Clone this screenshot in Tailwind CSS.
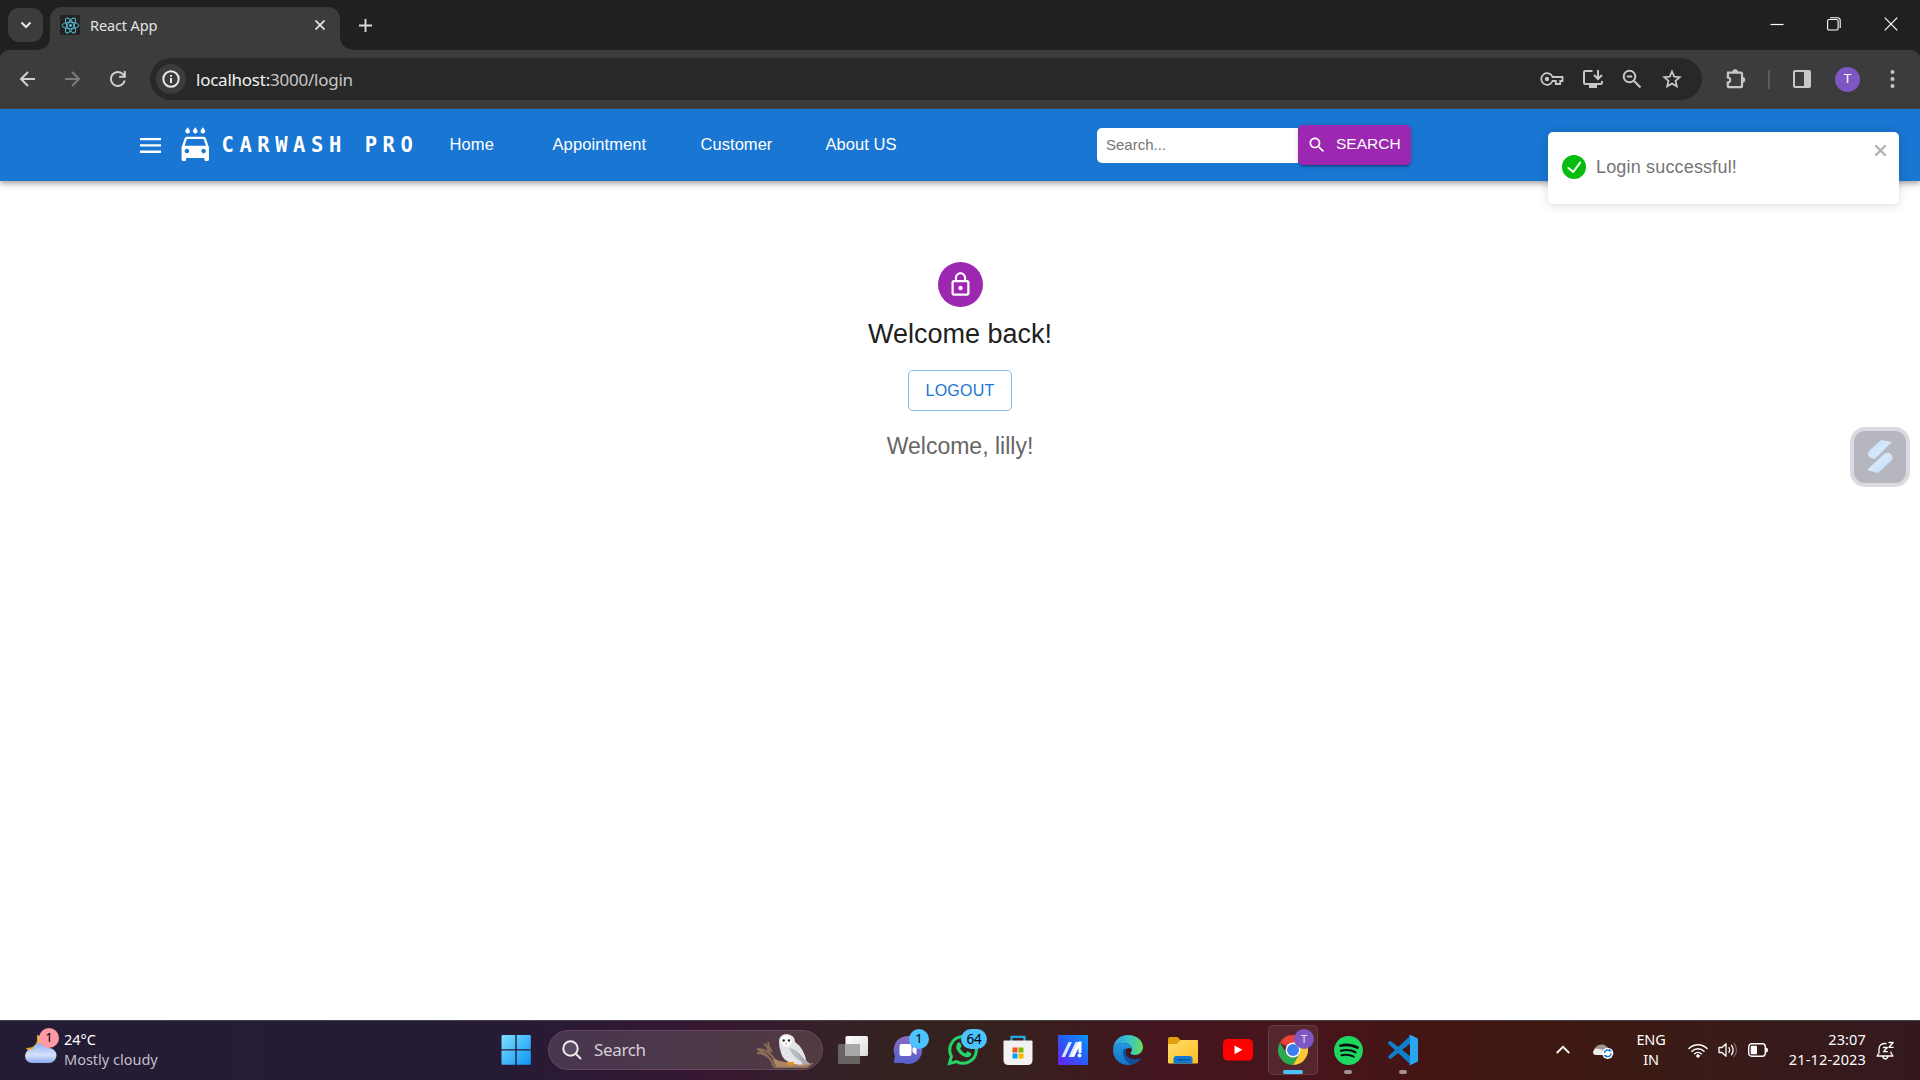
<!DOCTYPE html>
<html lang="en">
<head>
<meta charset="utf-8">
<title>React App</title>
<script src="https://cdn.jsdelivr.net/npm/@tailwindcss/browser@4"></script>
</head>
<body class="flex h-screen w-screen flex-col overflow-hidden bg-white font-['Liberation_Sans',Arial,sans-serif]">

<!-- Tab strip -->
<header class="flex h-[50px] shrink-0 items-stretch bg-[#1f2120] font-['Noto_Sans',sans-serif]">
  <button class="ml-2 mt-2 flex h-[34px] w-[35px] items-center justify-center rounded-[11px] bg-[#3c3c3c]">
    <svg class="size-[12px]" viewBox="0 0 12 12" fill="none" stroke="#e8e8e8" stroke-width="2"><path d="M1.500 3.500 6 8l4.500-4.500"/></svg>
  </button>
  <div class="relative -ml-2 flex w-[321px] items-center pl-[25px] pr-[31px]">
    <svg class="absolute inset-0 h-[50px] w-[321px]" viewBox="0 0 321 50" fill="#3c3c3c"><path d="M0 50c10 0 15-5 15-14V19C15 12 20 7 27 7h266c7 0 12 5 12 12v17c0 9 6 14 16 14z"/></svg>
    <div class="relative flex size-5 items-center justify-center rounded-[2px] bg-[#222]">
      <svg class="size-[19px]" viewBox="-10 -10 20 20" fill="none" stroke="#58c4dc" stroke-width="1"><circle r="1.500" fill="#58c4dc" stroke="none"/><ellipse rx="8.800" ry="3.400"/><ellipse rx="8.800" ry="3.400" transform="rotate(60)"/><ellipse rx="8.800" ry="3.400" transform="rotate(120)"/></svg>
    </div>
    <span class="relative ml-[10px] pt-px text-[14.500px] tracking-[-0.120px] text-[#e3e3e3]">React App</span>
    <svg class="relative ml-auto size-[10px]" viewBox="0 0 10 10" stroke="#e3e3e3" stroke-width="1.800"><path d="M.5.5l9 9M9.500.5l-9 9"/></svg>
  </div>
  <button class="flex w-4 items-center justify-end">
    <svg class="size-[13px]" viewBox="0 0 13 13" stroke="#dadada" stroke-width="1.900"><path d="M6.500 0v13M0 6.500h13"/></svg>
  </button>
  <div class="ml-auto flex items-center pb-[2px] pr-[22px]">
    <svg class="mr-[43px] h-[14px] w-[14px]" viewBox="0 0 14 14" stroke="#fff" stroke-width="1.200"><path d="M.5 7.500h13"/></svg>
    <svg class="mr-[43px] h-[14px] w-[14px]" viewBox="0 0 14 14" fill="none" stroke="#fff" stroke-width="1.100"><rect x=".6" y="2.500" width="10.500" height="10.500" rx="1.500"/><path d="M3 .7h7.500c1.600 0 2.700 1.100 2.700 2.700V11"/></svg>
    <svg class="h-[14px] w-[14px]" viewBox="0 0 14 14" stroke="#fff" stroke-width="1.200"><path d="M.7.7l12.600 12.600M13.300.7.7 13.300"/></svg>
  </div>
</header>

<!-- Address bar -->
<div class="shrink-0 bg-[#1f2120]">
<div class="flex h-[59px] items-center rounded-t-[9px] border-b border-[#4a4a46] bg-[#3c3c3c] pl-[18px] pr-[18px]">
  <svg class="size-5" viewBox="0 0 20 20" fill="none" stroke="#d0d0d0" stroke-width="2"><path d="M17 10H3M10 3l-7 7 7 7"/></svg>
  <svg class="ml-6 size-5" viewBox="0 0 20 20" fill="none" stroke="#7c7c7c" stroke-width="2"><path d="M3 10h14M10 3l7 7-7 7"/></svg>
  <svg class="ml-[26px] size-5" viewBox="0 0 20 20" fill="none" stroke="#d0d0d0" stroke-width="2"><path d="M16.700 11.500A7 7 0 1 1 15 5.200l1.500 1.700"/><path d="M16.800 2v5.700h-5.700"/></svg>
  <div class="ml-[22px] flex h-[42px] w-[1552px] items-center rounded-full bg-[#282828] pl-[6px] pr-[19px]">
    <span class="flex size-[30px] items-center justify-center rounded-full bg-[#3c3c3c]"><svg class="size-[18px]" viewBox="0 0 18 18" fill="none" stroke="#e8e8e8" stroke-width="2"><circle cx="9" cy="9" r="7.700"/><path d="M9 8v5M9 5v1.800"/></svg></span>
    <span class="ml-[10px] pt-px font-['Noto_Sans',sans-serif] text-[17px] tracking-[-0.240px] text-[#c7c7c7]"><span class="text-[#f0f0f0]">localhost:</span>3000/login</span>
    <div class="ml-auto flex items-center gap-[18px]">
      <svg class="h-[22px] w-6" viewBox="0 0 24 22" fill="none" stroke="#c7c7c7" stroke-width="1.800"><path d="M12.500 9h10v4h-2.300v3h-4.400v-3h-3.300a5.800 5.800 0 1 1 0-4z"/><circle cx="7" cy="11" r="2.200" fill="#c7c7c7" stroke="none"/></svg>
      <svg class="-mr-px size-[22px]" viewBox="0 0 22 22" fill="none" stroke="#c7c7c7" stroke-width="2"><path d="M10.500 3H3.300Q2 3 2 4.300v10.400Q2 16 3.300 16h15.400q1.300 0 1.300-1.300V13"/><path d="M16 2v8.500M12 7l4 4 4-4"/><path d="M7 16h8v4H7z" fill="#c7c7c7" stroke="none"/></svg>
      <svg class="size-[22px]" viewBox="0 0 22 22" fill="none" stroke="#c7c7c7" stroke-width="2"><circle cx="8.500" cy="8.500" r="5.800"/><path d="M5.800 8.500h5.400M12.800 12.800l6.700 6.700"/></svg>
      <svg class="size-[22px]" viewBox="0 0 22 22" fill="none" stroke="#c7c7c7" stroke-width="1.800"><path d="M11 3.500l2.200 5.200 5.500.5-4.200 3.700 1.300 5.500L11 15.500l-4.800 2.900 1.300-5.500-4.200-3.700 5.500-.5z"/></svg>
    </div>
  </div>
  <svg class="ml-[23px] size-[22px]" viewBox="0 0 22 22" fill="none" stroke="#c7c7c7" stroke-width="2.200"><path d="M3 4.600h13q1 0 1 1v12.600q0 1-1 1H3.800q-1 0-1-1v-3.700c3.200 0 3.200-5 0-5z"/><path d="M8 4a2.200 2.200 0 0 1 4.400 0zM17.500 9.500a2.200 2.200 0 0 1 0 4.400z" fill="#c7c7c7" stroke="none"/><path d="M8.200 4a2 2 0 0 1 4 0M17.500 9.700a2 2 0 0 1 0 4" stroke-width="1.600"/></svg>
  <span class="ml-[21px] h-[19px] w-[2px] bg-[#5c5c5c]"></span>
  <svg class="ml-[22px] size-5" viewBox="0 0 20 20" fill="none" stroke="#c7c7c7" stroke-width="2"><rect x="2" y="2" width="16" height="16" rx="1"/><path d="M12 2h6v16h-6z" fill="#c7c7c7" stroke="none"/></svg>
  <span class="ml-[23px] flex size-[25px] items-center justify-center rounded-full bg-[#7e57c2] text-[13px] text-white">T</span>
  <svg class="ml-auto h-5 w-[19px]" viewBox="0 0 19 20" fill="#c7c7c7"><circle cx="9.500" cy="3" r="2"/><circle cx="9.500" cy="10" r="2"/><circle cx="9.500" cy="17" r="2"/></svg>
</div>
</div>

<!-- App bar -->
<nav class="relative z-10 flex h-[72px] shrink-0 items-center bg-[#1976d2] pl-[140px] text-white shadow-[0px_2px_4px_-1px_rgba(0,0,0,0.2),0px_4px_5px_0px_rgba(0,0,0,0.14),0px_1px_10px_0px_rgba(0,0,0,0.12)]">
  <svg class="h-[15px] w-[21px]" viewBox="0 0 21 15" fill="#fff"><path d="M0 0h21v2.300H0zM0 6.300h21v2.300H0zM0 12.600h21v2.300H0z"/></svg>
  <svg class="mb-px ml-4 size-[36.500px]" viewBox="0 0 24 24" fill="#fff"><path d="M17 5c.83 0 1.500-.67 1.500-1.500 0-1-1.500-2.700-1.500-2.700s-1.500 1.700-1.500 2.700c0 .83.67 1.500 1.500 1.500zm-5 0c.83 0 1.500-.67 1.500-1.500 0-1-1.500-2.700-1.500-2.700s-1.500 1.700-1.500 2.700c0 .83.67 1.500 1.500 1.500zM7 5c.83 0 1.500-.67 1.500-1.500C8.500 2.500 7 .8 7 .8S5.500 2.500 5.500 3.500C5.500 4.330 6.170 5 7 5zm11.920 3.010C18.720 7.420 18.160 7 17.500 7h-11c-.66 0-1.210.42-1.420 1.010L3 14v8c0 .55.45 1 1 1h1c.55 0 1-.45 1-1v-1h12v1c0 .55.45 1 1 1h1c.55 0 1-.45 1-1v-8l-2.080-5.990zM6.500 18c-.83 0-1.500-.67-1.500-1.500S5.670 15 6.500 15s1.500.67 1.500 1.500S7.330 18 6.500 18zm11 0c-.83 0-1.500-.67-1.500-1.500s.67-1.500 1.500-1.500 1.500.67 1.500 1.500-.67 1.500-1.500 1.500zM5 13l1.500-4.500h11L19 13H5z"/></svg>
  <span class="ml-[8px] w-[228px] whitespace-nowrap font-['DejaVu_Sans_Mono',monospace] text-[20.500px] font-bold tracking-[5.560px]">CARWASH PRO</span>
  <a class="w-[103px] whitespace-nowrap pb-[2px] text-[16.500px] tracking-[0.100px]">Home</a>
  <a class="w-[148px] whitespace-nowrap pb-[2px] text-[16.500px] tracking-[0.100px]">Appointment</a>
  <a class="w-[125px] whitespace-nowrap pb-[2px] text-[16.500px] tracking-[0.050px]">Customer</a>
  <a class="w-[271.500px] whitespace-nowrap pb-[2px] text-[16.500px] tracking-[0.050px]">About US</a>
  <div class="flex h-[35px] w-[201px] items-center rounded-l-[5px] bg-white pl-[9px] pt-px text-[15px] text-[#757575]">Search...</div>
  <button class="flex h-10 w-[113px] items-center rounded-[5px] bg-[#9c27b0] pl-[9px] shadow-[0px_3px_1px_-2px_rgba(0,0,0,0.2),0px_2px_2px_0px_rgba(0,0,0,0.14),0px_1px_5px_0px_rgba(0,0,0,0.12)]">
    <svg class="size-5" viewBox="0 0 24 24" fill="#fff"><path d="M15.500 14h-.79l-.28-.27C15.410 12.590 16 11.110 16 9.500 16 5.910 13.090 3 9.500 3S3 5.910 3 9.500 5.910 16 9.500 16c1.610 0 3.090-.59 4.230-1.570l.27.28v.79l5 4.990L20.490 19l-4.990-5zm-6 0C7.010 14 5 11.990 5 9.500S7.010 5 9.500 5 14 7.010 14 9.500 11.990 14 9.500 14z"/></svg>
    <span class="ml-[9px] whitespace-nowrap pb-[2px] text-[15.500px] tracking-[0px]">SEARCH</span>
  </button>

  <!-- Toast -->
  <div class="absolute left-[1548px] top-[23px] flex h-[72px] w-[351px] items-center rounded-[5px] bg-white pb-[2px] pl-[14px] shadow-[0_1px_10px_0_rgba(0,0,0,0.1),0_2px_15px_0_rgba(0,0,0,0.05)]">
    <svg class="size-6" viewBox="0 0 24 24" fill="#07bc0c"><path d="M12 0a12 12 0 1 0 12 12A12.014 12.014 0 0 0 12 0zm6.927 8.200-6.845 9.289a1.011 1.011 0 0 1-1.430.188l-4.888-3.908a1 1 0 1 1 1.250-1.562l4.076 3.261 6.227-8.451a1 1 0 1 1 1.610 1.183z"/></svg>
    <span class="ml-[10px] whitespace-nowrap text-[18px] tracking-[0.170px] text-[#757575]">Login successful!</span>
    <svg class="mb-[34px] ml-auto mr-[12px] h-[13px] w-[13px]" viewBox="0 0 13 13" stroke="#b2b2b2" stroke-width="2.400" stroke-linecap="round"><path d="M2 2l9 9M11 2l-9 9"/></svg>
  </div>
</nav>

<!-- Page -->
<main class="relative flex min-h-0 flex-1 flex-col items-center pt-[81px]">
  <div class="flex size-[45px] items-center justify-center rounded-full bg-[#9c27b0]">
    <svg class="size-[27px]" viewBox="0 0 24 24" fill="#fff"><path d="M12 17c1.100 0 2-.9 2-2s-.9-2-2-2-2 .9-2 2 .9 2 2 2zm6-9h-1V6c0-2.760-2.240-5-5-5S7 3.240 7 6v2H6c-1.100 0-2 .9-2 2v10c0 1.100.9 2 2 2h12c1.100 0 2-.9 2-2V10c0-1.100-.9-2-2-2zM8.900 6c0-1.710 1.390-3.100 3.100-3.100s3.100 1.390 3.100 3.100v2H8.900V6zM18 20H6V10h12v10z"/></svg>
  </div>
  <h1 class="mt-[9px] text-[27px] leading-[36px] text-[#212121]">Welcome back!</h1>
  <button class="mt-[18px] flex h-[41px] w-[104px] items-center justify-center rounded-[5px] border border-[#8cbae8] text-[16px] tracking-[0.200px] text-[#1976d2]">LOGOUT</button>
  <p class="mt-[18px] text-[23px] leading-[34px] text-[#666]">Welcome, lilly!</p>
  <div class="absolute left-[1850px] top-[246px] flex size-[60px] items-center justify-center rounded-[15px] border-[4px] border-[#dadae0] bg-[#b6b7be]">
    <svg class="size-[52px]" viewBox="0 0 52 52"><defs><linearGradient id="s" x1="0" y1="0" x2="1" y2="1"><stop stop-color="#c0dcfa"/><stop offset=".5" stop-color="#d6e8fb"/><stop offset="1" stop-color="#b3d3f8"/></linearGradient></defs><path d="M27 9l11 2-17 17q-7-1-7-5 0-2 2-4z" fill="url(#s)"/><path d="M30 23q2-2 5-1 5 2 3 7L24 42l-11-3z" fill="url(#s)"/></svg>
  </div>
</main>

<!-- Taskbar -->
<footer class="flex h-[60px] shrink-0 items-center border-t border-[#45434a] bg-[linear-gradient(90deg,#241c34_0%,#251b36_26%,#301834_33%,#371731_37%,#35202a_42%,#33221f_47%,#36211f_52%,#43161f_60%,#47141b_68%,#421612_75%,#3e1912_83%,#381b18_90%,#33191f_100%)] pb-px font-['Noto_Sans',sans-serif] text-white">
  <div class="flex w-[501px] items-center pl-6">
    <div class="relative size-10">
      <svg class="size-10" viewBox="0 0 40 40"><defs><linearGradient id="m" x1="0" y1="0" x2="0" y2="1"><stop stop-color="#f9c440"/><stop offset="1" stop-color="#f28c1c"/></linearGradient><linearGradient id="cl" x1="0" y1="0" x2="0" y2="1"><stop stop-color="#8bb0f4"/><stop offset=".6" stop-color="#d5e2fa"/><stop offset="1" stop-color="#88a8ea"/></linearGradient></defs><path d="M13 5q2 13-11 13 4 7 12 5 8-2 8-10-1-6-9-8z" fill="url(#m)"/><path d="M8 33a7 7 0 0 1 0-14h1a8.500 8.500 0 0 1 16-1 7.500 7.500 0 0 1 0 15z" fill="url(#cl)"/></svg>
      <span class="absolute left-[15px] top-[-2px] flex size-5 items-center justify-center rounded-full bg-[#ff99a4] text-[13px] text-black">1</span>
    </div>
    <div class="pb-[3px] text-[14.500px] leading-5 tracking-[0px]"><div>24°C</div><div class="text-[#c2bfc6]">Mostly cloudy</div></div>
  </div>

  <div class="flex w-[47px] items-center"><svg class="size-[30px]" viewBox="0 0 30 30"><defs><linearGradient id="w" x1="0" y1="0" x2="1" y2="1"><stop stop-color="#7fe0ff"/><stop offset="1" stop-color="#0a94f5"/></linearGradient></defs><path d="M1.500 0H14.300V14.300H.5V1Q.5 0 1.500 0zM15.700 0H29q.8 0 .8 1V14.300H15.700zM.5 15.600H14.300V29.800H1.500q-1 0-1-1zM15.700 15.600H29.800V28.800q0 1-1 1H15.700z" fill="url(#w)"/></svg></div>

  <div class="flex h-10 w-[275px] items-center rounded-full border border-[#69495f] bg-gradient-to-r from-[#483650] to-[#523a42] pl-[13px] pr-[7px]">
    <svg class="size-5" viewBox="0 0 20 20" fill="#6b5b73" fill-opacity=".5" stroke="#eee" stroke-width="2" stroke-linecap="round"><circle cx="8.500" cy="8.500" r="7.200"/><path d="M14 14l4.500 4.500"/></svg>
    <span class="ml-[12px] text-[17px] tracking-[-0.350px] text-[#d6ced6]">Search</span>
    <svg class="ml-auto h-[36px] w-[62px]" viewBox="0 0 62 36"><path d="M4 17q11 0 17 10 5 5 14 5h23l-4 3H23q-3 0-4-5-5-9-14-12M11 12q4 2 5 8M15 10q1 7 4 10M4 21q6 0 11 4" fill="none" stroke="#8a6d52" stroke-width="2"/><path d="M20 26q6 5 38 6-3 3-8 3H24q-4-3-4-9z" fill="#a98661"/><path d="M26 10q0-8 8-8 8 1 8 8 9 6 12 21-5 3-12 1-12-2-14-11-2-6-2-11z" fill="#e4e4e6"/><path d="M36 16q10 1 17 15-10-1-17-15z" fill="#b4bcc4"/><path d="M44 20l13 12-7 1z" fill="#a9adb3"/><path d="M27.500 9q.5-5.500 5.500-5.500t6 5.500q-1 5-5.500 5.500-5-.5-6-5.500z" fill="#fff"/><circle cx="30.700" cy="8.500" r="1.200" fill="#222"/><circle cx="36" cy="8.500" r="1.200" fill="#222"/><path d="M33 9.500l1 3.500-1.700-.5z" fill="#c89a86"/><path d="M34 30h7v3h-7z" fill="#e0902f"/></svg>
  </div>

  <div class="ml-[5px] flex h-[50px] items-center gap-[5px]">
    <div class="flex size-[50px] items-center justify-center"><svg class="size-[30px]" viewBox="0 0 30 30"><defs><linearGradient id="tv" x1="0" y1="0" x2="1" y2="1"><stop stop-color="#fff"/><stop offset="1" stop-color="#ddd"/></linearGradient></defs><rect y="9" width="22" height="20" rx="1.500" fill="#686463"/><rect x="7.500" y="1" width="22.500" height="20" rx="1.500" fill="url(#tv)"/><path d="M7.500 9H22v12H7.500z" fill="#aaa8a7"/></svg></div>
    <div class="relative flex size-[50px] items-center justify-center"><svg class="size-[30px]" viewBox="0 0 30 30"><defs><linearGradient id="ch" x1="0" y1="0" x2="0" y2="1"><stop stop-color="#8a6ac0"/><stop offset="1" stop-color="#5561d0"/></linearGradient></defs><path d="M15 1a14 14 0 1 1-5 27H1.500q-1 0-.5-2l1-5A14 14 0 0 1 15 1z" fill="url(#ch)"/><rect x="6.500" y="9" width="12" height="12" rx="2" fill="#fff"/><path d="M19.500 13l4-3v10l-4-3z" fill="#fff"/></svg><span class="absolute left-[26px] top-[4px] flex size-5 items-center justify-center rounded-full bg-[#4cc2ff] text-[13px] text-black">1</span></div>
    <div class="relative flex size-[50px] items-center justify-center"><svg class="size-[32px]" viewBox="0 0 32 32"><path d="M2.500 29.500l1.900-7.200A13.300 13.300 0 1 1 9.700 27.600z" fill="none" stroke="#25d366" stroke-width="3"/><path d="M10.500 9q2-1.500 3 .5l1 2.500q0 1-1.500 2.500 2 3.500 5.500 5l2-2.200 3.700 1.900q.5 3.500-3.700 4-4.500 0-8.800-4.700-4.200-5-1.200-9.500z" fill="#25d366"/></svg><span class="absolute left-[23px] top-[4px] flex h-5 w-[26px] items-center justify-center rounded-full bg-[#4cc2ff] text-[13.500px] tracking-[-0.300px] text-black">64</span></div>
    <div class="flex size-[50px] items-center justify-center"><svg class="size-[30px]" viewBox="0 0 30 30"><path d="M8.500 6V1.800h13V6" fill="none" stroke="#28a8e0" stroke-width="2.200"/><path d="M1.500 5.500h27q1 0 1 1V25q0 5-5 5h-19q-5 0-5-5V6.500q0-1 1-1z" fill="#f2f2f2"/><path d="M9.500 12.500h5v5h-5z" fill="#f25022"/><path d="M15.500 12.500h5v5h-5z" fill="#7fba00"/><path d="M9.500 18.500h5v5h-5z" fill="#00a4ef"/><path d="M15.500 18.500h5v5h-5z" fill="#ffb900"/></svg></div>
    <div class="flex size-[50px] items-center justify-center"><svg class="size-[30px]" viewBox="0 0 30 30"><defs><linearGradient id="my" x1="1" y1="0" x2="0" y2="1"><stop stop-color="#0997fa"/><stop offset=".5" stop-color="#285af5"/><stop offset="1" stop-color="#6a20f0"/></linearGradient></defs><path d="M0 0h30v30H0z" fill="url(#my)"/><path d="M10.500 7H14L7 22H3.500zM17.500 7H21l-7 15h-3.500z" fill="#d9e6ff"/><path d="M20.500 6.500h3V18h-3v-5L16 22h-3z" fill="#fff"/><circle cx="21.500" cy="20.500" r="2" fill="#fff"/></svg></div>
    <div class="flex size-[50px] items-center justify-center"><svg class="size-[30px]" viewBox="0 0 30 30"><defs><linearGradient id="e1" x1="0" y1="0" x2="1" y2="0"><stop stop-color="#2a9ee0"/><stop offset=".5" stop-color="#35c1d0"/><stop offset="1" stop-color="#68e05a"/></linearGradient><linearGradient id="e2" x1="0" y1="0" x2="0" y2="1"><stop stop-color="#2497dd"/><stop offset="1" stop-color="#1573c8"/></linearGradient></defs><path d="M0 14C1 5 7 0 15 0c9 0 15 6 15 12 0 5-4 8-8 8-3.500 0-5-1.500-4.500-2.500 1-1 1.500-2 1.500-3.500 0-3-4-6-8.500-6S2 9.500 0 14z" fill="url(#e1)"/><path d="M0 15C1 10 5 8 10 8c5 0 9 3 9 6-4-3-8 1-8 5 0 5 4 9 8 10.500C9 32 0 25 0 15z" fill="url(#e2)"/><path d="M11 13.500C8 19 12 27 19 29.500q6-1.500 9.500-6.500-7 3-13-.5-4-3-2.500-8z" fill="#0e4fa0"/></svg></div>
    <div class="flex size-[50px] items-center justify-center"><svg class="size-[30px]" viewBox="0 0 30 30"><defs><linearGradient id="fo" x1="0" y1="0" x2="1" y2="1"><stop stop-color="#ffdc6b"/><stop offset="1" stop-color="#fcbf25"/></linearGradient></defs><path d="M0 4q0-2 2-2h7.500l3 3v5H0z" fill="#dfa00c"/><path d="M0 9h9l3.500-4H29q1 0 1 1v21.500q0 1-1 1H1q-1 0-1-1z" fill="url(#fo)"/><path d="M5.500 28.500V24q0-3 3-3h13q3 0 3 3v4.500z" fill="#0f78d0"/><path d="M9 24.700h12.500" stroke="#0b4f93" stroke-width="1.300"/></svg></div>
    <div class="flex size-[50px] items-center justify-center"><svg class="h-[22px] w-[30px]" viewBox="0 0 30 22"><rect width="30" height="21.500" rx="4.500" fill="#f00"/><path d="M11.500 6.500l8 4.300-8 4.400z" fill="#fff"/></svg></div>
    <div class="relative flex size-[50px] items-center justify-center rounded-[5px] border border-white/10 bg-white/8"><svg class="size-[30px]" viewBox="0 0 30 30"><path d="M15 15L2 7.500A15 15 0 0 1 28 7.500H15z" fill="#ea4335"/><path d="M2 7.500A15 15 0 0 0 15 30l6.500-11.200L8.500 18.800z" fill="#2da94f"/><path d="M15 30A15 15 0 0 0 28 7.500H15l6.500 11.300z" fill="#fcc934"/><circle cx="15" cy="15" r="7.500" fill="#fff"/><circle cx="15" cy="15" r="6" fill="#3b7ded"/></svg><span class="absolute left-[25px] top-[3px] flex size-5 items-center justify-center rounded-full bg-[#7e57c2] text-[11px] text-white/80">T</span><span class="absolute bottom-0 left-[14px] h-1 w-5 rounded-full bg-[#4cc2ff]"></span></div>
    <div class="relative flex size-[50px] items-center justify-center"><svg class="size-[29px]" viewBox="0 0 29 29" fill="none" stroke="#0b0b0b" stroke-linecap="round"><circle cx="14.500" cy="14.500" r="14.400" fill="#1ed760" stroke="none"/><path d="M6.500 9.700q9-2.500 17 1.800" stroke-width="2.700"/><path d="M7 14.700q8-2 14.500 1.600" stroke-width="2.200"/><path d="M7.500 19.300q6.500-1.500 12.200 1.400" stroke-width="1.900"/></svg><span class="absolute bottom-px left-[21px] h-1 w-2 rounded-full bg-[#a39195]"></span></div>
    <div class="relative flex size-[50px] items-center justify-center"><svg class="size-[30px]" viewBox="0 0 30 30"><path d="M0 21.500 22.500.5v7.800L3.300 23.500q-1 .8-2 0z" fill="#0f7fcb"/><path d="M0 8.500q-.3-.6 0-1l1.300-1q1-.8 2 0L22.500 21.500v8z" fill="#0f7fcb"/><path d="M22.500 0l6.500 3q1 .5 1 1.500v21q0 1-1 1.500l-6.500 3q-1 0-1.500-.5 1 0 1-1.500V2q0-1.500-1-1.500.5-.5 1.500-.5z" fill="#2aa6f0"/></svg><span class="absolute bottom-px left-[21px] h-1 w-2 rounded-full bg-[#a39195]"></span></div>
  </div>

  <div class="ml-auto flex items-center pr-[25px]">
    <svg class="mr-[22px] h-[10px] w-[14px]" viewBox="0 0 14 10" fill="none" stroke="#fff" stroke-width="1.800"><path d="M.8 8 7 1.800 13.200 8"/></svg>
    <svg class="mr-[21px] h-[18px] w-[22px]" viewBox="0 0 22 18"><path d="M4 14a4.500 4.500 0 0 1 0-8 7 6 0 0 1 12 1v7z" fill="#a39494"/><path d="M1 11q2-5 6-3 4-1 5 6H4q-3 0-3-3z" fill="#eee"/><circle cx="15.700" cy="12.300" r="5.600" fill="#fff"/><circle cx="15.700" cy="12.300" r="3.300" fill="none" stroke="#1976d2" stroke-width="1.400" stroke-dasharray="7 3.400"/><path d="M17 7.500v3h3zM14.500 17v-3h-3z" fill="#1976d2"/></svg>
    <div class="mr-[21px] w-[32px] pb-[2px] text-center text-[14.500px] leading-5 tracking-[-0.150px]"><div>ENG</div><div>IN</div></div>
    <svg class="mr-[10px] h-4 w-5" viewBox="0 0 20 16" fill="none" stroke="#fff" stroke-width="1.500" stroke-linecap="round"><path d="M1 6.500a12.500 12.500 0 0 1 18 0M4 9.200a8.500 8.500 0 0 1 12 0M6.700 11.700a4.800 4.800 0 0 1 6.600 0"/><circle cx="10" cy="14" r="1.300" fill="#fff" stroke-width="1"/></svg>
    <svg class="mr-[10px] h-4 w-5" viewBox="0 0 20 16" fill="none" stroke="#fff" stroke-width="1.300" stroke-linecap="round" stroke-linejoin="round"><path d="M1 5.500h3L8 1.800v12.400L4 10.500H1z"/><path d="M11 5.500q1.500 2.500 0 5M13.500 3.300q3.200 4.700 0 9.400"/><path d="M16 1.500q5 6.500 0 13" stroke="#776260"/></svg>
    <svg class="mr-[20px] h-[14px] w-5" viewBox="0 0 20 14"><rect x=".7" y=".8" width="16.600" height="12.400" rx="3" fill="none" stroke="#fff" stroke-width="1.400"/><rect x="2.700" y="2.800" width="6.300" height="8.400" rx="1" fill="#fff"/><path d="M18 4.500q2 0 2 2.500t-2 2.500z" fill="#fff"/></svg>
    <div class="mr-[10px] w-[78px] whitespace-nowrap pb-[3px] text-right text-[14.500px] leading-5 tracking-[0.150px]"><div>23:07</div><div>21-12-2023</div></div>
    <svg class="h-[19px] w-[19px]" viewBox="0 0 19 19" fill="none" stroke="#fff" stroke-width="1.300" stroke-linejoin="round" stroke-linecap="round"><path d="M10 2.500Q3 2.300 3 8v4l-2 3h16l-2-3v-1M6.500 15.500q1 2.500 2.800 2.500t2.700-2.500"/><path d="M7.500 6.500h3.800l-3.800 4.200h3.800M13 1.500h4.200L13 6.300h4.200"/></svg>
  </div>
</footer>
</body>
</html>
